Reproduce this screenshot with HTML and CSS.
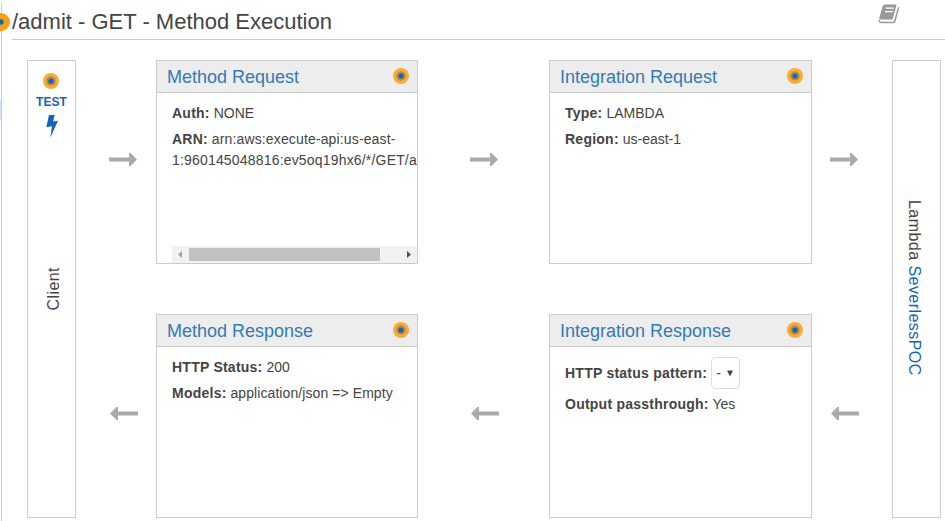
FILE: index.html
```html
<!DOCTYPE html>
<html lang="en">
<head>
<meta charset="utf-8">
<title>Method Execution</title>
<link rel="stylesheet" href="styles.css">
</head>
<body>
<svg class="defs" width="0" height="0" aria-hidden="true">
  <symbol id="dot" viewBox="0 0 16 16"><circle cx="8" cy="8" r="8" fill="#fcab35"/><circle cx="8" cy="8" r="4.7" fill="#b68b43"/><circle cx="8" cy="8" r="2.6" fill="#1166bb"/></symbol>
  <symbol id="arrow" viewBox="0 0 28 13"><path d="M0 4.5h20V0h1.5L28 6.5 21.5 13H20V8.5H0z" fill="#aaa"/></symbol>
</svg>
<div class="tree-edge"><span class="tree-mark"></span></div>
<main class="page">
  <header class="title-bar">
    <svg class="title-dot" viewBox="0 0 18 18"><circle cx="9" cy="9" r="9" fill="#ff9d12"/><circle cx="9" cy="9" r="2.7" fill="#1166bb"/></svg>
    <h1>/admit - GET - Method Execution</h1>
    <svg class="book" viewBox="0 0 22 20"><path d="M7 .5h10.7q1 0 .7 1l-3.8 14H2q-1.2 0-.8-1.2L4.7 2Q5.200.5 7 .5z" fill="#999"/><path d="M20.200 3.200q.4.4.2 1.100l-3.700 13.200q-.3 1-1.500 1H3.500q-2.300 0-2.200-2.500" fill="none" stroke="#999" stroke-width="1.500"/><path d="M7.800 4.200h8M6.900 7.600h8" stroke="#fff" stroke-width="1.300"/></svg>
  </header>
  <div class="flow">
    <section class="rail client">
      <svg class="dot"><use href="#dot"/></svg>
      <span class="test">TEST</span>
      <svg class="bolt" viewBox="0 0 12 23"><path d="M3 0h5.700L7.100 6.500 12 5.700 4.400 22.500 5.900 11.200.3 12.300z" fill="#1166bb"/></svg>
      <span class="client-label">Client</span>
    </section>
    <svg class="arrow a1"><use href="#arrow"/></svg>
    <section class="card">
      <div class="head"><h2>Method Request</h2><svg class="dot"><use href="#dot"/></svg></div>
      <div class="body scroll">
        <p><b>Auth:</b> <span class="none">NONE</span></p>
        <p class="arn"><b>ARN:</b> <span class="arn-start">arn:aws:execute-api:us-east-</span><br><span class="arn-rest">1:960145048816:ev5oq19hx6/*/GET/admit</span></p>
        <div class="scrollbar"><svg viewBox="0 0 17 17"><path d="M10 5v7L6 8.500z" fill="#a3a3a3"/></svg><span class="thumb"></span><svg class="end" viewBox="0 0 17 17"><path d="M7 5v7l4-3.500z" fill="#505050"/></svg></div>
      </div>
    </section>
    <svg class="arrow a2"><use href="#arrow"/></svg>
    <section class="card integration">
      <div class="head"><h2>Integration Request</h2><svg class="dot"><use href="#dot"/></svg></div>
      <div class="body">
        <p><b>Type:</b> <span class="lambda-type">LAMBDA</span></p>
        <p><b>Region:</b> us-east-1</p>
      </div>
    </section>
    <svg class="arrow a3"><use href="#arrow"/></svg>
    <section class="rail lambda"><span class="lambda-label">Lambda <a>SeverlessPOC</a></span></section>
    <svg class="arrow back a1"><use href="#arrow"/></svg>
    <section class="card">
      <div class="head"><h2>Method Response</h2><svg class="dot"><use href="#dot"/></svg></div>
      <div class="body">
        <p><b>HTTP Status:</b> 200</p>
        <p><b>Models:</b> <span class="model">application/json =&gt; Empty</span></p>
      </div>
    </section>
    <svg class="arrow back a2"><use href="#arrow"/></svg>
    <section class="card integration">
      <div class="head"><h2>Integration Response</h2><svg class="dot"><use href="#dot"/></svg></div>
      <div class="body">
        <p class="pattern"><b>HTTP status pattern:</b><span class="select">-<svg viewBox="0 0 7 7"><path d="M0 0h7L3.500 7z" fill="#444"/></svg></span></p>
        <p><b>Output passthrough:</b> Yes</p>
      </div>
    </section>
    <svg class="arrow back a3"><use href="#arrow"/></svg>
  </div>
</main>
</body>
</html>
```
FILE: styles.css
```css
* { box-sizing: border-box; }
body { margin: 0; width: 945px; height: 521px; overflow: hidden; display: flex; background: #fff; color: #444; font-family: "Liberation Sans", Arial, sans-serif; font-size: 14px; }
svg { display: block; flex: none; }
.defs { position: absolute; }
h1, h2, p { margin: 0; font-weight: normal; }
.tree-edge { width: 2px; height: 518px; margin-top: 3px; border-right: 1px solid #ccc; padding-top: 97px; }
.tree-mark { display: block; width: 1px; height: 20px; background: #cfe3fb; }
.page { width: 943px; padding-left: 10px; }
.title-bar { position: relative; height: 40px; border-bottom: 1px solid #ccc; display: flex; }
.title-dot { position: absolute; left: -20px; top: 13px; width: 18px; height: 18px; }
h1 { width: 866px; font-size: 22px; line-height: 43px; white-space: nowrap; }
.book { width: 22px; height: 20px; margin-top: 4px; }
.flow { display: grid; grid-template-columns: 49px 80px 262px 131px 263px 80px 49px; grid-template-rows: 204px 204px; row-gap: 50px; margin: 20px 0 0 15px; }
.rail { grid-row: 1 / 3; border: 1px solid #ccc; display: flex; flex-direction: column; align-items: center; }
.client { grid-column: 1; }
.lambda { grid-column: 7; padding: 139px 5px 0 0; }
.dot { width: 16px; height: 16px; }
.client .dot { margin: 12px 2px 0 0; }
.test { margin-top: 6px; font-weight: bold; font-size: 12px; line-height: 14px; letter-spacing: .1px; color: #16b; }
.bolt { width: 12px; height: 23px; margin-top: 6px; }
.client-label, .lambda-label { writing-mode: vertical-rl; font-size: 16px; line-height: 20px; white-space: nowrap; letter-spacing: .45px; }
.client-label { transform: rotate(180deg); margin: 129px 0 0 4px; }
a { color: #16b; }
.card { border: 1px solid #ccc; overflow: hidden; min-width: 0; }
.head { height: 32px; background: #ededed; border-bottom: 1px solid #ccc; padding: 0 8px 0 10px; display: flex; justify-content: space-between; }
.head .dot { margin-top: 7px; }
h2 { font-size: 18px; line-height: 32px; color: #337ab7; white-space: nowrap; }
.body { padding: 10px 0 0 15px; white-space: nowrap; }
p { line-height: 21px; margin-bottom: 5px; }
b { letter-spacing: .24px; }
.arn-start { letter-spacing: .14px; }
.arn-rest { letter-spacing: .18px; }
.model { letter-spacing: .08px; }
.scrollbar { display: flex; width: 245px; height: 17px; margin-top: 75px; background: #f1f1f1; }
.scrollbar svg { width: 17px; height: 17px; }
.thumb { width: 191px; height: 13px; margin-top: 2px; background: #c1c1c1; }
.scrollbar .end { margin-left: auto; }
.arrow { width: 28px; height: 13px; margin-top: 93px; }
.a1 { margin-left: 33px; }
.a2 { margin-left: 52px; }
.a3 { margin-left: 18px; }
.back { transform: rotate(180deg); translate: 1px 0; }
.back.a1 { grid-column: 2; }
.pattern { display: flex; align-items: center; height: 32px; margin-bottom: 5px; }
.select { width: 29px; height: 32px; margin-left: 4px; padding: 0 6px 0 4px; border: 1px solid #ddd; border-radius: 4px; display: flex; align-items: center; justify-content: space-between; }
.select svg { width: 6px; height: 7px; }
```
